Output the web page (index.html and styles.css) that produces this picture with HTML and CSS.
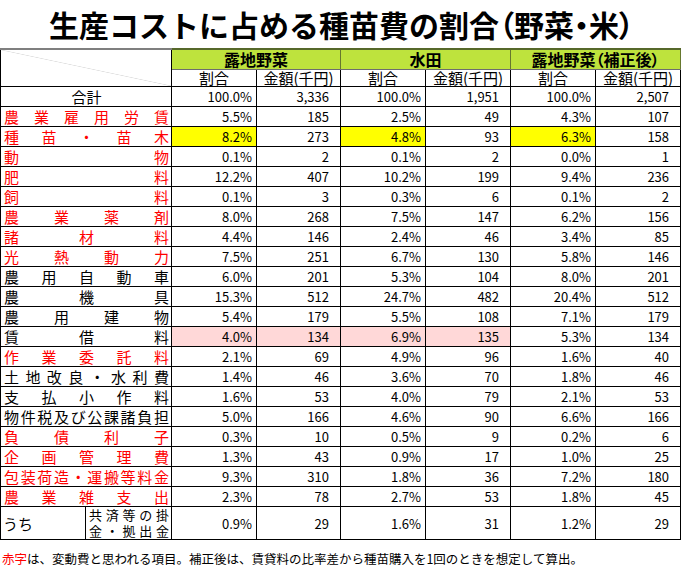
FILE: index.html
```html
<!DOCTYPE html>
<html lang="ja">
<head>
<meta charset="utf-8">
<link rel="stylesheet" href="styles.css">
</head>
<body>
<h1 class="title">生産コストに占める種苗費の割合<span class="p">（</span>野菜<span class="p">・</span>米<span class="p">）</span></h1>
<table class="cost">
<colgroup>
<col class="c-l1"><col class="c-l2"><col class="c-n"><col class="c-n2"><col class="c-n"><col class="c-n"><col class="c-n"><col class="c-n">
</colgroup>
<thead>
<tr class="hr1">
<th class="corner" colspan="2" rowspan="2"></th>
<th class="grp" colspan="2">露地野菜</th>
<th class="grp" colspan="2">水田</th>
<th class="grp p" colspan="2">露地野菜（補正後）</th>
</tr>
<tr class="hr2">
<th>割合</th><th>金額(千円)</th>
<th>割合</th><th>金額(千円)</th>
<th>割合</th><th>金額(千円)</th>
</tr>
</thead>
<tbody>
<tr><td class="lbl ctr" colspan="2">合計</td><td class="n">100.0%</td><td class="a">3,336</td><td class="n">100.0%</td><td class="a">1,951</td><td class="n">100.0%</td><td class="a">2,507</td></tr>
<tr class="red"><td class="lbl" colspan="2"><div class="d"><span>農</span><span>業</span><span>雇</span><span>用</span><span>労</span><span>賃</span></div></td><td class="n">5.5%</td><td class="a">185</td><td class="n">2.5%</td><td class="a">49</td><td class="n">4.3%</td><td class="a">107</td></tr>
<tr class="red"><td class="lbl" colspan="2"><div class="d"><span>種</span><span>苗</span><span>・</span><span>苗</span><span>木</span></div></td><td class="n yel">8.2%</td><td class="a">273</td><td class="n yel">4.8%</td><td class="a">93</td><td class="n yel">6.3%</td><td class="a">158</td></tr>
<tr class="red"><td class="lbl" colspan="2"><div class="d"><span>動</span><span>物</span></div></td><td class="n">0.1%</td><td class="a">2</td><td class="n">0.1%</td><td class="a">2</td><td class="n">0.0%</td><td class="a">1</td></tr>
<tr class="red"><td class="lbl" colspan="2"><div class="d"><span>肥</span><span>料</span></div></td><td class="n">12.2%</td><td class="a">407</td><td class="n">10.2%</td><td class="a">199</td><td class="n">9.4%</td><td class="a">236</td></tr>
<tr class="red"><td class="lbl" colspan="2"><div class="d"><span>飼</span><span>料</span></div></td><td class="n">0.1%</td><td class="a">3</td><td class="n">0.3%</td><td class="a">6</td><td class="n">0.1%</td><td class="a">2</td></tr>
<tr class="red"><td class="lbl" colspan="2"><div class="d"><span>農</span><span>業</span><span>薬</span><span>剤</span></div></td><td class="n">8.0%</td><td class="a">268</td><td class="n">7.5%</td><td class="a">147</td><td class="n">6.2%</td><td class="a">156</td></tr>
<tr class="red"><td class="lbl" colspan="2"><div class="d"><span>諸</span><span>材</span><span>料</span></div></td><td class="n">4.4%</td><td class="a">146</td><td class="n">2.4%</td><td class="a">46</td><td class="n">3.4%</td><td class="a">85</td></tr>
<tr class="red"><td class="lbl" colspan="2"><div class="d"><span>光</span><span>熱</span><span>動</span><span>力</span></div></td><td class="n">7.5%</td><td class="a">251</td><td class="n">6.7%</td><td class="a">130</td><td class="n">5.8%</td><td class="a">146</td></tr>
<tr><td class="lbl" colspan="2"><div class="d"><span>農</span><span>用</span><span>自</span><span>動</span><span>車</span></div></td><td class="n">6.0%</td><td class="a">201</td><td class="n">5.3%</td><td class="a">104</td><td class="n">8.0%</td><td class="a">201</td></tr>
<tr><td class="lbl" colspan="2"><div class="d"><span>農</span><span>機</span><span>具</span></div></td><td class="n">15.3%</td><td class="a">512</td><td class="n">24.7%</td><td class="a">482</td><td class="n">20.4%</td><td class="a">512</td></tr>
<tr><td class="lbl" colspan="2"><div class="d"><span>農</span><span>用</span><span>建</span><span>物</span></div></td><td class="n">5.4%</td><td class="a">179</td><td class="n">5.5%</td><td class="a">108</td><td class="n">7.1%</td><td class="a">179</td></tr>
<tr><td class="lbl" colspan="2"><div class="d"><span>賃</span><span>借</span><span>料</span></div></td><td class="n pink">4.0%</td><td class="a pink">134</td><td class="n pink">6.9%</td><td class="a pink">135</td><td class="n">5.3%</td><td class="a">134</td></tr>
<tr class="red"><td class="lbl" colspan="2"><div class="d"><span>作</span><span>業</span><span>委</span><span>託</span><span>料</span></div></td><td class="n">2.1%</td><td class="a">69</td><td class="n">4.9%</td><td class="a">96</td><td class="n">1.6%</td><td class="a">40</td></tr>
<tr><td class="lbl" colspan="2"><div class="d"><span>土</span><span>地</span><span>改</span><span>良</span><span>・</span><span>水</span><span>利</span><span>費</span></div></td><td class="n">1.4%</td><td class="a">46</td><td class="n">3.6%</td><td class="a">70</td><td class="n">1.8%</td><td class="a">46</td></tr>
<tr><td class="lbl" colspan="2"><div class="d"><span>支</span><span>払</span><span>小</span><span>作</span><span>料</span></div></td><td class="n">1.6%</td><td class="a">53</td><td class="n">4.0%</td><td class="a">79</td><td class="n">2.1%</td><td class="a">53</td></tr>
<tr><td class="lbl" colspan="2"><div class="d"><span>物</span><span>件</span><span>税</span><span>及</span><span>び</span><span>公</span><span>課</span><span>諸</span><span>負</span><span>担</span></div></td><td class="n">5.0%</td><td class="a">166</td><td class="n">4.6%</td><td class="a">90</td><td class="n">6.6%</td><td class="a">166</td></tr>
<tr class="red"><td class="lbl" colspan="2"><div class="d"><span>負</span><span>債</span><span>利</span><span>子</span></div></td><td class="n">0.3%</td><td class="a">10</td><td class="n">0.5%</td><td class="a">9</td><td class="n">0.2%</td><td class="a">6</td></tr>
<tr class="red"><td class="lbl" colspan="2"><div class="d"><span>企</span><span>画</span><span>管</span><span>理</span><span>費</span></div></td><td class="n">1.3%</td><td class="a">43</td><td class="n">0.9%</td><td class="a">17</td><td class="n">1.0%</td><td class="a">25</td></tr>
<tr class="red"><td class="lbl" colspan="2"><div class="d"><span>包</span><span>装</span><span>荷</span><span>造</span><span>・</span><span>運</span><span>搬</span><span>等</span><span>料</span><span>金</span></div></td><td class="n">9.3%</td><td class="a">310</td><td class="n">1.8%</td><td class="a">36</td><td class="n">7.2%</td><td class="a">180</td></tr>
<tr class="red"><td class="lbl" colspan="2"><div class="d"><span>農</span><span>業</span><span>雑</span><span>支</span><span>出</span></div></td><td class="n">2.3%</td><td class="a">78</td><td class="n">2.7%</td><td class="a">53</td><td class="n">1.8%</td><td class="a">45</td></tr>
<tr class="tall"><td class="uchi">うち</td><td class="kake"><div class="d"><span>共</span><span>済</span><span>等</span><span>の</span><span>掛</span></div><div class="d"><span>金</span><span>・</span><span>拠</span><span>出</span><span>金</span></div></td><td class="n">0.9%</td><td class="a">29</td><td class="n">1.6%</td><td class="a">31</td><td class="n">1.2%</td><td class="a">29</td></tr>
</tbody>
</table>
<p class="note"><span class="rt">赤字</span>は、変動費と思われる項目。補正後は、賃貸料の比率差から種苗購入を1回のときを想定して算出。</p>
</body>
</html>
```
FILE: styles.css
```css
body {
  margin: 0;
  background: #fff;
  color: #000;
  font-family: "Noto Sans CJK JP", sans-serif;
}
.title {
  margin: 6px 0 6px;
  font-size: 30px;
  line-height: 36px;
  font-weight: 700;
  text-align: center;
}
.p { font-feature-settings: "palt"; }

.cost {
  border-collapse: collapse;
  table-layout: fixed;
  width: 681px;
}
.c-l1 { width: 85px; }
.c-l2 { width: 86px; }
.c-n { width: 85px; }
.c-n2 { width: 84px; }

.cost th, .cost td {
  border: 1px solid #000;
  padding: 0;
  font-weight: normal;
  white-space: nowrap;
}
.hr1 th {
  height: 19px;
  border-top: 2px solid #7f7f7f;
}
.corner {
  background: linear-gradient(to bottom left, transparent calc(50% - 0.6px), #dcdcdc 50%, transparent calc(50% + 0.6px));
}
.cost .grp {
  background: #bee33d;
  font-size: 16px;
  line-height: 19px;
  font-weight: 700;
  border-color: #66782e;
  border-top: 2px solid #56682a;
  border-bottom-color: #6e6e6e;
}
.hr2 th {
  height: 16px;
  font-size: 15px;
  line-height: 16px;
  text-align: center;
}
.cost tbody td {
  height: 19px;
  line-height: 19px;
}
.cost .lbl {
  font-size: 15px;
  padding: 0 2px 0 3px;
}
.ctr { text-align: center; }
.d {
  display: flex;
  justify-content: space-between;
}
.red .lbl { color: #ff0000; }
.n, .a {
  text-align: right;
  font-size: 13px;
}
.cost .n { padding-right: 4px; }
.cost .a { padding-right: 11px; }
.yel { background: #ffff00; }
.pink { background: #ffd8d8; }

.cost tbody .tall td { height: 32px; }
.cost .uchi {
  font-size: 15px;
  padding-left: 2px;
}
.cost .kake {
  font-size: 13px;
  line-height: 16px;
  padding: 0 2px 0 3px;
}
.kake .d { height: 16px; }
.note {
  margin: 10px 0 0 2px;
  font-size: 12.5px;
  line-height: 18px;
}
.rt { color: #ff0000; }
```
